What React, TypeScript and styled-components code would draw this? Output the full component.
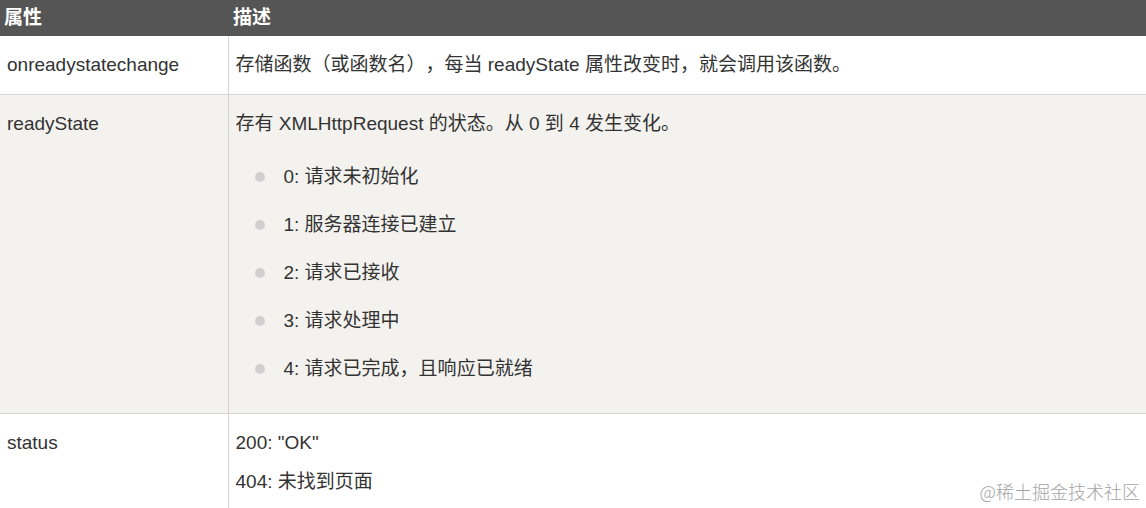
import styled, { createGlobalStyle } from 'styled-components';

const GlobalStyle = createGlobalStyle`
    body {
        margin: 0;
        background: #fff;
        font-family: "Liberation Sans", Arial, "Noto Sans CJK SC", sans-serif;
        color: #333;
        text-spacing-trim: space-all;
    }
`;

const Page = styled.div`
    position: relative;
    width: 1146px;
    height: 508px;
    overflow: hidden;
`;

const Table = styled.table`
    width: 100%;
    border-collapse: collapse;
    font-size: 19px;
    line-height: 24px;
`;

const Head = styled.th<{ $first?: boolean }>`
    background: #555;
    color: #fff;
    font-weight: bold;
    text-align: left;
    height: 36px;
    padding: 0 0 0 ${p => (p.$first ? '4px' : '5px')};
    width: ${p => (p.$first ? '224px' : 'auto')};
`;

const Row = styled.tr<{ $alt?: boolean }>`
    background: ${p => (p.$alt ? '#f3f2ee' : '#fff')};
    border-bottom: 1px solid #d4d4d4;
    &:last-child {
        border-bottom: none;
    }
`;

const Cell = styled.td<{ $first?: boolean }>`
    vertical-align: top;
    padding: 17px 7px 17px 7px;
    border-left: ${p => (p.$first ? 'none' : '1px solid #d4d4d4')};
`;

const Para = styled.p`
    margin: 0;
    & + & {
        margin-top: 15px;
    }
`;

const List = styled.ul`
    list-style: none;
    margin: 17px 0 3px;
    padding: 0;
`;

const Item = styled.li`
    position: relative;
    padding: 12px 0 12px 48px;
    &::before {
        content: '';
        position: absolute;
        left: 19px;
        top: 19px;
        width: 10px;
        height: 10px;
        border-radius: 50%;
        background: #d0d0d0;
    }
`;

const Watermark = styled.div`
    position: absolute;
    right: 6px;
    bottom: 7px;
    font-size: 18px;
    line-height: 20px;
    color: #a4a4a4;
    font-family: "Noto Sans CJK SC", sans-serif;
    font-weight: 300;
`;

const states = [
    '0: 请求未初始化',
    '1: 服务器连接已建立',
    '2: 请求已接收',
    '3: 请求处理中',
    '4: 请求已完成，且响应已就绪',
];

export default function App() {
    return (
        <Page>
            <GlobalStyle />
            <Table>
                <thead>
                    <tr>
                        <Head $first>属性</Head>
                        <Head>描述</Head>
                    </tr>
                </thead>
                <tbody>
                    <Row>
                        <Cell $first>onreadystatechange</Cell>
                        <Cell>存储函数（或函数名），每当 readyState 属性改变时，就会调用该函数。</Cell>
                    </Row>
                    <Row $alt>
                        <Cell $first>readyState</Cell>
                        <Cell>
                            <Para>存有 XMLHttpRequest 的状态。从 0 到 4 发生变化。</Para>
                            <List>
                                {states.map(s => (
                                    <Item key={s}>{s}</Item>
                                ))}
                            </List>
                        </Cell>
                    </Row>
                    <Row>
                        <Cell $first>status</Cell>
                        <Cell>
                            <Para>200: "OK"</Para>
                            <Para>404: 未找到页面</Para>
                        </Cell>
                    </Row>
                </tbody>
            </Table>
            <Watermark>@稀土掘金技术社区</Watermark>
        </Page>
    );
}
